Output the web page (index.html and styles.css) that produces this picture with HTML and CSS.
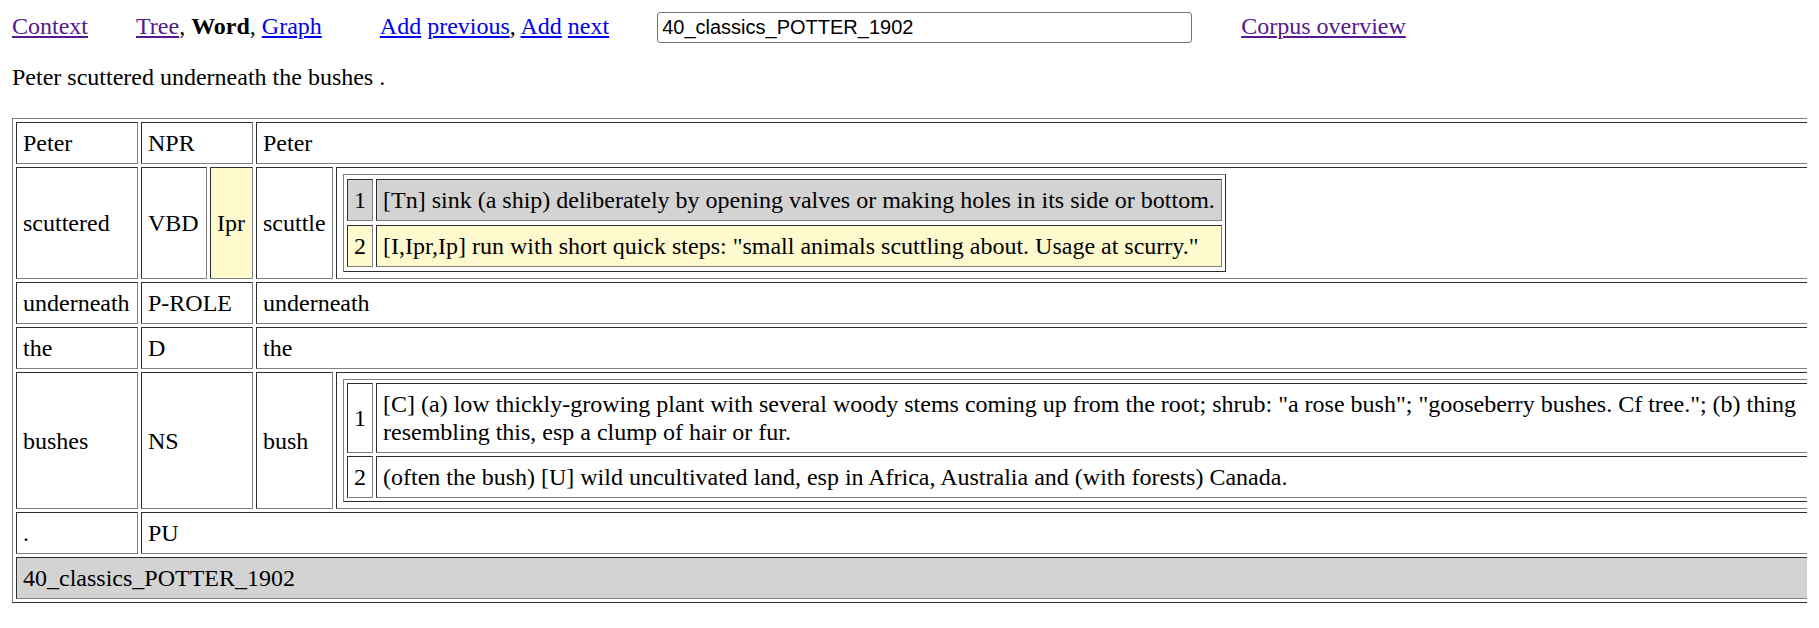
FILE: index.html
```html
<!DOCTYPE html>
<html lang="en">
<head>
<meta charset="utf-8">
<title>Word view</title>
<link rel="stylesheet" href="styles.css">
</head>
<body>
<div class="nav">
  <a class="visited" href="#context">Context</a>
  <span class="nav-group"><a class="visited" href="#tree">Tree</a>, <b>Word</b>, <a href="#graph">Graph</a></span>
  <span class="nav-group nav-add"><a href="#prev">Add</a> <a href="#prev">previous</a>, <a href="#next">Add</a> <a href="#next">next</a></span>
  <input class="doc-input" type="text" value="40_classics_POTTER_1902">
  <a class="visited nav-corpus" href="#corpus">Corpus overview</a>
</div>

<p class="sentence">Peter scuttered underneath the bushes .</p>

<table class="words">
  <colgroup>
    <col class="c-word">
    <col class="c-pos">
    <col class="c-frame">
    <col class="c-lemma">
    <col class="c-def">
  </colgroup>
  <tr>
    <td>Peter</td>
    <td colspan="2">NPR</td>
    <td colspan="2">Peter</td>
  </tr>
  <tr>
    <td>scuttered</td>
    <td>VBD</td>
    <td class="hl">Ipr</td>
    <td>scuttle</td>
    <td>
      <table class="senses">
        <tr class="sel">
          <td>1</td>
          <td>[Tn] sink (a ship) deliberately by opening valves or making holes in its side or bottom.</td>
        </tr>
        <tr class="hl">
          <td>2</td>
          <td>[I,Ipr,Ip] run with short quick steps: "small animals scuttling about. Usage at scurry."</td>
        </tr>
      </table>
    </td>
  </tr>
  <tr>
    <td>underneath</td>
    <td colspan="2">P-ROLE</td>
    <td colspan="2">underneath</td>
  </tr>
  <tr>
    <td>the</td>
    <td colspan="2">D</td>
    <td colspan="2">the</td>
  </tr>
  <tr>
    <td>bushes</td>
    <td colspan="2">NS</td>
    <td>bush</td>
    <td>
      <table class="senses senses-wide">
        <tr>
          <td>1</td>
          <td>[C] (a) low thickly-growing plant with several woody stems coming up from the root; shrub: "a rose bush"; "gooseberry bushes. Cf tree."; (b) thing resembling this, esp a clump of hair or fur.</td>
        </tr>
        <tr>
          <td>2</td>
          <td>(often the bush) [U] wild uncultivated land, esp in Africa, Australia and (with forests) Canada.</td>
        </tr>
      </table>
    </td>
  </tr>
  <tr>
    <td>.</td>
    <td colspan="4">PU</td>
  </tr>
  <tr>
    <td colspan="5" class="source">40_classics_POTTER_1902</td>
  </tr>
</table>
</body>
</html>
```

FILE: styles.css
```css
html {
  overflow: hidden;
}

body {
  margin: 12px;
  font-family: "Liberation Serif", "Times New Roman", serif;
  font-size: 24px;
  line-height: 28px;
  color: #000;
  background: #fff;
}

a {
  color: #0000ee;
}

a.visited {
  color: #551a8b;
}

.nav {
  display: flex;
  align-items: baseline;
  column-gap: 48px;
  white-space: nowrap;
}

.nav-add {
  margin-left: 10px;
}

.nav-corpus {
  margin-left: 1px;
}

.doc-input {
  box-sizing: border-box;
  width: 535px;
  height: 31px;
  padding: 3px 4px;
  border: 1px solid #767676;
  border-radius: 3px;
  font-family: "Liberation Sans", Arial, sans-serif;
  font-size: 20px;
  line-height: normal;
  color: #000;
  background: #fff;
}

.sentence {
  margin: 20px 0 27px;
}

table {
  border-collapse: separate;
  border-spacing: 3px;
  border-width: 1px;
  border-style: solid;
  border-color: #808080 #2e2e2e #2e2e2e #808080;
}

td {
  padding: 6px;
  border-width: 1px;
  border-style: solid;
  border-color: #2e2e2e #808080 #808080 #2e2e2e;
  vertical-align: middle;
}

.words {
  table-layout: fixed;
  box-sizing: border-box;
  width: 1854px;
}

.c-word { width: 122px; }
.c-pos { width: 66px; }
.c-frame { width: 43px; }
.c-lemma { width: 77px; }
.c-def { width: 1526px; }

.senses {
  margin: 0;
  border-spacing: 3px 4px;
}

.senses-wide {
  width: 100%;
  border-spacing: 3px;
}

.senses td:first-child {
  white-space: nowrap;
}

.hl,
.hl td {
  background: #fffacd;
}

.sel td {
  background: #d3d3d3;
}

.source {
  background: #d3d3d3;
}
```
